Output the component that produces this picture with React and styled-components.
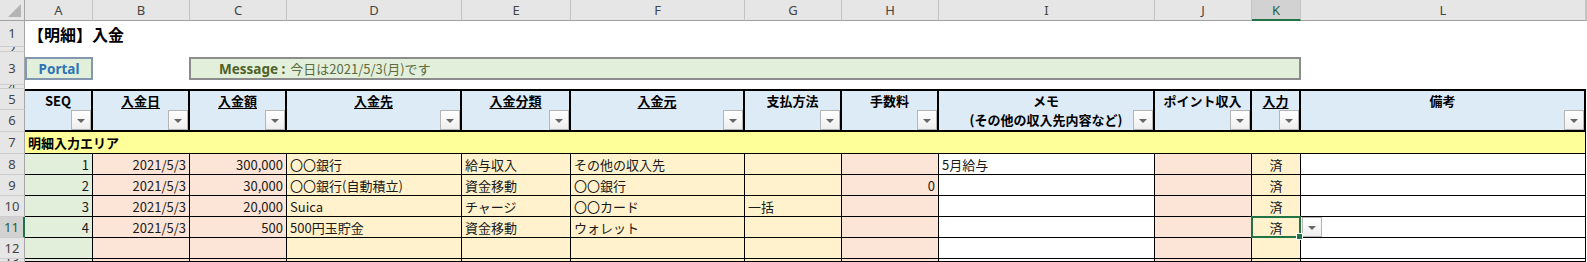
import React from "react";
import styled, { createGlobalStyle, css } from "styled-components";

const GlobalStyle = createGlobalStyle`
  html, body { margin: 0; padding: 0; background: #ffffff; overflow: hidden; }
  #root { width: 1587px; height: 262px; }
`;

const JP = `"Noto Sans CJK JP", "Noto Sans", sans-serif`;
const UI = `"Noto Sans", "Noto Sans CJK JP", sans-serif`;
const GREEN = "#217346";

const place = css`
  grid-row: ${(p) => p.$r} / span ${(p) => p.$rs || 1};
  grid-column: ${(p) => p.$c} / span ${(p) => p.$cs || 1};
`;

const Sheet = styled.div`
  display: grid;
  width: 1587px;
  height: 262px;
  overflow: hidden;
  grid-template-columns: 25px 68px 97px 97px 175px 109px 174px 97px 97px 216px 97px 49px 285px 1fr;
  grid-template-rows: 21px 26px 5px 33px 4px 21px 22px 22px repeat(5, 21px) 1fr;
  font-family: ${JP};
  font-size: 13px;
  color: #000;
  background: #fff;
`;

const Corner = styled.div`
  ${place};
  box-sizing: border-box;
  background: #e6e6e6;
  border-right: 1px solid #a6a6a6;
  border-bottom: 1px solid #a0a0a0;
  display: flex;
  align-items: flex-end;
  justify-content: flex-end;
  padding: 0 3px 3px 0;
  &::after {
    content: "";
    width: 0;
    height: 0;
    border-left: 13px solid transparent;
    border-bottom: 13px solid #b4b4b4;
  }
`;

const ColHeader = styled.div`
  ${place};
  box-sizing: border-box;
  background: ${(p) => (p.$selected ? "#d2d2d2" : "#e6e6e6")};
  border-right: 1px solid #c4c4c4;
  border-bottom: ${(p) => (p.$selected ? `2px solid ${GREEN}` : "1px solid #a0a0a0")};
  display: flex;
  align-items: center;
  justify-content: center;
  font-family: ${UI};
  font-size: 13px;
  color: ${(p) => (p.$selected ? "#1d5e39" : "#444")};
  padding-top: ${(p) => (p.$selected ? "1px" : "0")};
`;

const RowHeader = styled.div`
  ${place};
  box-sizing: border-box;
  background: ${(p) => (p.$selected ? "#d2d2d2" : "#e6e6e6")};
  border-right: ${(p) => (p.$selected ? `2px solid ${GREEN}` : "1px solid #a6a6a6")};
  border-bottom: 1px solid #cdcdcd;
  display: flex;
  align-items: center;
  justify-content: center;
  overflow: hidden;
  font-family: ${UI};
  font-size: 13px;
  line-height: 1;
  color: ${(p) => (p.$selected ? "#1d5e39" : "#444")};
`;

const Title = styled.div`
  ${place};
  display: flex;
  align-items: center;
  padding-left: 3px;
  font-size: 16px;
  font-weight: 700;
  white-space: nowrap;
`;

const BoxCell = styled.div`
  ${place};
  display: flex;
  align-items: center;
`;

const PortalButton = styled.div`
  box-sizing: border-box;
  width: 100%;
  height: 23px;
  background: #e2efda;
  border: 2px solid #8497b0;
  display: flex;
  align-items: center;
  justify-content: center;
  font-family: ${UI};
  font-weight: 700;
  font-size: 13.5px;
  color: #2e75b6;
`;

const MessageBox = styled.div`
  box-sizing: border-box;
  width: calc(100% + 1px);
  margin-left: -1px;
  height: 23px;
  background: #e2efda;
  border: 2px solid #8c8c8c;
  display: flex;
  align-items: center;
  padding-left: 28px;
  gap: 5px;
  font-size: 13px;
  white-space: nowrap;
`;

const MessageLabel = styled.span`
  font-family: ${UI};
  font-weight: 700;
  font-size: 13.5px;
  color: #4f6228;
`;

const MessageText = styled.span`
  font-family: ${JP};
  color: #5e6a40;
`;

const HeaderCell = styled.div`
  ${place};
  position: relative;
  box-sizing: border-box;
  background: #ddebf7;
  border-top: 2px solid #000;
  border-right: 2px solid #000;
  border-bottom: 2px solid #000;
  display: flex;
  flex-direction: column;
  font-weight: 700;
  white-space: nowrap;
`;

const HeaderLine = styled.div`
  height: 19px;
  display: flex;
  align-items: center;
  justify-content: center;
  text-decoration: ${(p) => (p.$underline ? "underline" : "none")};
  text-underline-offset: 2px;
`;

const FilterButton = styled.span`
  position: absolute;
  right: 0;
  bottom: 0;
  width: 20px;
  height: 20px;
  box-sizing: border-box;
  border: 1px solid #b5b5b5;
  background: linear-gradient(#ffffff, #eeeeee);
  display: flex;
  align-items: center;
  justify-content: center;
  &::after {
    content: "";
    width: 0;
    height: 0;
    margin-top: 2px;
    border-left: 4px solid transparent;
    border-right: 4px solid transparent;
    border-top: 4px solid #666;
  }
`;

const SectionBar = styled.div`
  ${place};
  box-sizing: border-box;
  background: #ffff99;
  border-right: 1px solid #000;
  border-bottom: 1px solid #000;
  display: flex;
  align-items: center;
  padding-left: 3px;
  font-weight: 700;
  font-size: 13px;
`;

const DataCell = styled.div`
  ${place};
  position: relative;
  box-sizing: border-box;
  background: ${(p) => p.$bg};
  border-right: 1px solid #000;
  border-bottom: 1px solid #000;
  display: flex;
  align-items: center;
  justify-content: ${(p) =>
    p.$align === "right" ? "flex-end" : p.$align === "center" ? "center" : "flex-start"};
  padding: 0 3px;
  white-space: nowrap;
  font-size: 13px;
  color: #1a1a1a;
`;

const SelectionFrame = styled.span`
  position: absolute;
  left: -1px;
  top: -1px;
  right: -1px;
  bottom: -1px;
  border: 2px solid ${GREEN};
  z-index: 3;
  pointer-events: none;
  &::after {
    content: "";
    position: absolute;
    right: -4px;
    bottom: -4px;
    width: 5px;
    height: 5px;
    background: ${GREEN};
    border: 1px solid #fff;
  }
`;

const ListButton = styled.span`
  position: absolute;
  left: 1px;
  top: 0;
  width: 20px;
  height: 20px;
  box-sizing: border-box;
  border: 1px solid #b5b5b5;
  background: linear-gradient(#ffffff, #eeeeee);
  display: flex;
  align-items: center;
  justify-content: center;
  z-index: 2;
  &::after {
    content: "";
    width: 0;
    height: 0;
    margin-top: 1px;
    border-left: 4px solid transparent;
    border-right: 4px solid transparent;
    border-top: 4px solid #666;
  }
`;

const LETTERS = ["A", "B", "C", "D", "E", "F", "G", "H", "I", "J", "K", "L"];

const HEADERS = [
  { label: "SEQ" },
  { label: "入金日", u: true },
  { label: "入金額", u: true },
  { label: "入金先", u: true },
  { label: "入金分類", u: true },
  { label: "入金元", u: true },
  { label: "支払方法" },
  { label: "手数料" },
  { label: "メモ", sub: "(その他の収入先内容など)" },
  { label: "ポイント収入" },
  { label: "入力", u: true },
  { label: "備考" },
];

const G = "#e2efda";
const S = "#fce4d6";
const Y = "#fff2cc";
const W = "#ffffff";
const COL_BG = [G, S, S, Y, Y, Y, Y, S, W, S, Y, W];
const COL_ALIGN = ["right", "right", "right", "left", "left", "left", "left", "right", "left", "left", "center", "left"];

const EMPTY = ["", "", "", "", "", "", "", "", "", "", "", ""];
const ROWS = [
  ["1", "2021/5/3", "300,000", "〇〇銀行", "給与収入", "その他の収入先", "", "", "5月給与", "", "済", ""],
  ["2", "2021/5/3", "30,000", "〇〇銀行(自動積立)", "資金移動", "〇〇銀行", "", "0", "", "", "済", ""],
  ["3", "2021/5/3", "20,000", "Suica", "チャージ", "〇〇カード", "一括", "", "", "", "済", ""],
  ["4", "2021/5/3", "500", "500円玉貯金", "資金移動", "ウォレット", "", "", "", "", "済", ""],
  EMPTY,
  EMPTY,
];

export default function App() {
  return (
    <>
      <GlobalStyle />
      <Sheet>
        <Corner $r={1} $c={1} />
        {LETTERS.map((l, i) => (
          <ColHeader key={l} $r={1} $c={i + 2} $selected={l === "K"}>
            {l}
          </ColHeader>
        ))}
        <ColHeader $r={1} $c={14} />

        {Array.from({ length: 13 }, (_, i) => (
          <RowHeader key={i} $r={i + 2} $c={1} $selected={i + 1 === 11}>
            {i + 1}
          </RowHeader>
        ))}

        <Title $r={2} $c={2} $cs={5}>【明細】入金</Title>

        <BoxCell $r={4} $c={2}>
          <PortalButton>Portal</PortalButton>
        </BoxCell>
        <BoxCell $r={4} $c={4} $cs={9}>
          <MessageBox>
            <MessageLabel>Message :</MessageLabel>
            <MessageText>今日は2021/5/3(月)です</MessageText>
          </MessageBox>
        </BoxCell>

        {HEADERS.map((h, i) => (
          <HeaderCell key={h.label} $r={6} $rs={2} $c={i + 2}>
            <HeaderLine $underline={h.u}>{h.label}</HeaderLine>
            <HeaderLine>{h.sub || ""}</HeaderLine>
            <FilterButton />
          </HeaderCell>
        ))}

        <SectionBar $r={8} $c={2} $cs={12}>明細入力エリア</SectionBar>

        {ROWS.map((row, ri) =>
          row.map((val, ci) => {
            const sheetRow = ri + 8;
            const selected = sheetRow === 11 && ci === 10;
            const listBtn = sheetRow === 11 && ci === 11;
            return (
              <DataCell
                key={`${ri}-${ci}`}
                $r={sheetRow + 1}
                $c={ci + 2}
                $bg={COL_BG[ci]}
                $align={COL_ALIGN[ci]}
              >
                {val}
                {selected && <SelectionFrame />}
                {listBtn && <ListButton />}
              </DataCell>
            );
          })
        )}
      </Sheet>
    </>
  );
}
